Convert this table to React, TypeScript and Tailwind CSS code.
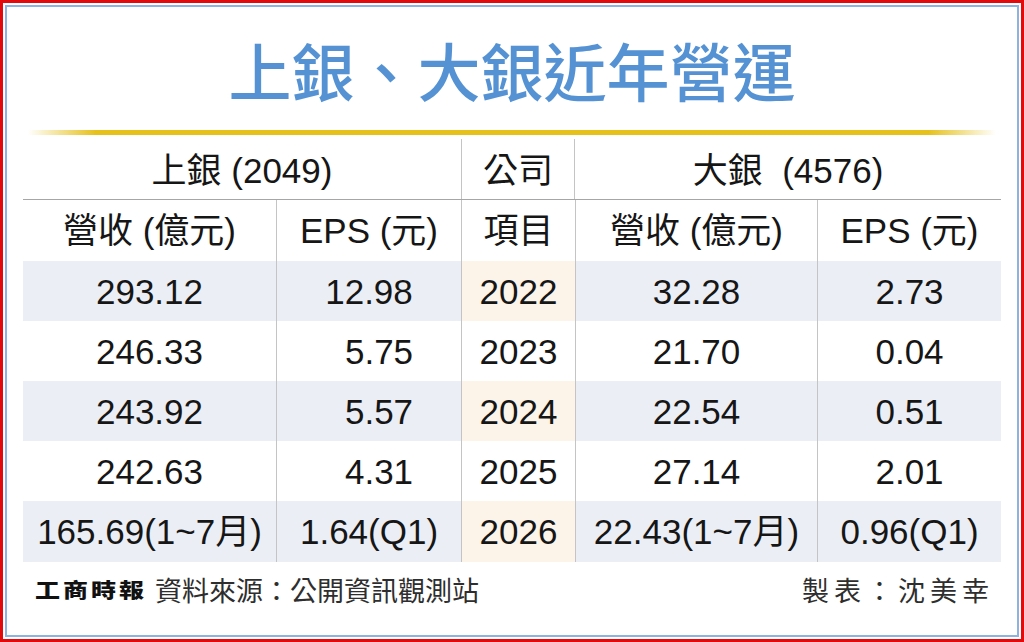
import React from "react";

const FONT = "font-['Liberation_Sans','Noto_Sans_CJK_TC',sans-serif]";
const CJK = "font-['Noto_Sans_CJK_TC','Liberation_Sans',sans-serif]";

type Row = { a: string; b: string; y: string; c: string; d: string; pad: boolean; h: string };

const rows: Row[] = [
  { a: "293.12", b: "12.98", y: "2022", c: "32.28", d: "2.73", pad: false, h: "h-[60px]" },
  { a: "246.33", b: "5.75", y: "2023", c: "21.70", d: "0.04", pad: true, h: "h-[60px]" },
  { a: "243.92", b: "5.57", y: "2024", c: "22.54", d: "0.51", pad: true, h: "h-[60px]" },
  { a: "242.63", b: "4.31", y: "2025", c: "27.14", d: "2.01", pad: true, h: "h-[60px]" },
  { a: "165.69(1~7月)", b: "1.64(Q1)", y: "2026", c: "22.43(1~7月)", d: "0.96(Q1)", pad: false, h: "h-[61px]" },
];

export default function App() {
  return (
    <div className="w-[1024px] h-[642px] border-[3px] border-[#e20a0a] bg-white p-[2px]">
      <div className="h-full border-2 border-[#8fb3df] bg-white flex flex-col">
        {/* Title */}
        <div className="h-[123px] pt-[30px] flex justify-center">
          <h1 className={`${CJK} text-[63px] leading-none font-medium text-[#5592d4]`}>上銀、大銀近年營運</h1>
        </div>
        {/* Yellow rule */}
        <div className="ml-[21px] mr-[21px] h-[5px] bg-[linear-gradient(to_right,rgba(232,195,31,0),#e6c11c_7%,#e6c11c_93%,rgba(232,195,31,0))]" />
        {/* Table */}
        <div className={`${FONT} ml-[16px] grid grid-cols-[253px_185px_114px_242px_184px] text-[35px] leading-none text-[#161616]`}>
          {/* Header row 1 */}
          <div className="col-span-2 h-[65px] border-b border-[#a6a6a6] flex items-center justify-center pt-[7px]">
            上銀 (2049)
          </div>
          <div className="h-[65px] border-b border-[#a6a6a6] pt-[4px]">
            <div className="h-full border-x border-[#c4c4c4] flex items-center justify-center pt-[3px]">公司</div>
          </div>
          <div className="col-span-2 h-[65px] border-b border-[#a6a6a6] flex items-center justify-center pt-[7px] whitespace-pre">
            {"大銀  (4576)"}
          </div>
          {/* Header row 2 */}
          <div className="h-[61px] flex items-center justify-center">營收 (億元)</div>
          <div className="h-[61px] border-l border-[#c4c4c4] flex items-center justify-center">EPS (元)</div>
          <div className="h-[61px] border-l border-[#c4c4c4] flex items-center justify-center">項目</div>
          <div className="h-[61px] border-l border-[#c4c4c4] flex items-center justify-center">營收 (億元)</div>
          <div className="h-[61px] border-l border-[#c4c4c4] flex items-center justify-center">EPS (元)</div>
          {/* Data rows */}
          {rows.map((r, i) => {
            const band = i % 2 === 0;
            const bg = band ? "bg-[#ebeef4]" : "bg-white";
            const bgY = band ? "bg-[#fcf4e8]" : "bg-white";
            return (
              <React.Fragment key={r.y}>
                <div className={`${r.h} ${bg} flex items-center justify-center`}>{r.a}</div>
                <div
                  className={`${r.h} ${bg} border-l border-[#c4c4c4] flex items-center justify-center ${
                    r.pad ? "pl-[20px]" : ""
                  }`}
                >
                  {r.b}
                </div>
                <div className={`${r.h} ${bgY} border-l border-[#c4c4c4] flex items-center justify-center`}>{r.y}</div>
                <div className={`${r.h} ${bg} border-l border-[#c4c4c4] flex items-center justify-center`}>{r.c}</div>
                <div className={`${r.h} ${bg} border-l border-[#c4c4c4] flex items-center justify-center`}>{r.d}</div>
              </React.Fragment>
            );
          })}
        </div>
        {/* Footer */}
        <div className={`${CJK} ml-[16px] w-[978px] h-[54px] flex items-center justify-between text-[#2e2e2e]`}>
          <div className="flex items-center pl-[12px]">
            <span className="inline-block text-[25px] leading-none font-black tracking-[3px] text-[#111] scale-y-[0.8]">
              工商時報
            </span>
            <span className="ml-[8px] text-[27px] leading-none">資料來源：公開資訊觀測站</span>
          </div>
          <span className="pr-[7px] text-[27px] leading-none tracking-[5px]">製表：沈美幸</span>
        </div>
      </div>
    </div>
  );
}
